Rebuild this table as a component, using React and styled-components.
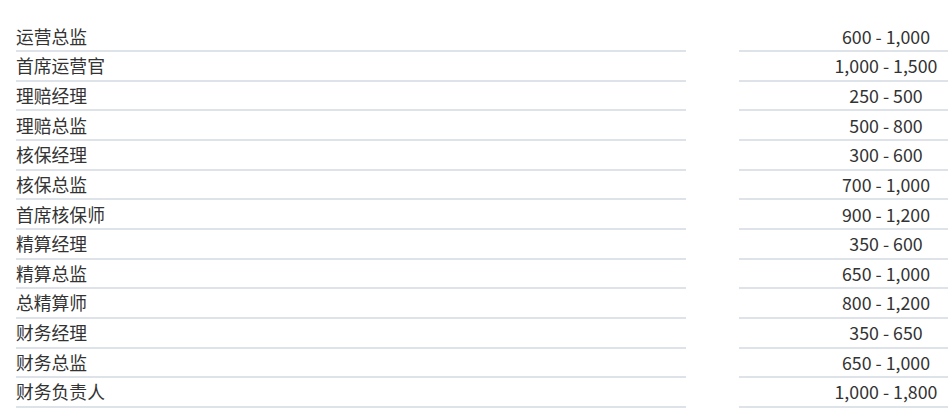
import styled, { createGlobalStyle } from 'styled-components';

const ROWS = [
  ['运营总监', '600 - 1,000'],
  ['首席运营官', '1,000 - 1,500'],
  ['理赔经理', '250 - 500'],
  ['理赔总监', '500 - 800'],
  ['核保经理', '300 - 600'],
  ['核保总监', '700 - 1,000'],
  ['首席核保师', '900 - 1,200'],
  ['精算经理', '350 - 600'],
  ['精算总监', '650 - 1,000'],
  ['总精算师', '800 - 1,200'],
  ['财务经理', '350 - 650'],
  ['财务总监', '650 - 1,000'],
  ['财务负责人', '1,000 - 1,800'],
];

function App() {
  return (
    <>
      <GlobalStyle />
      <PageWrapper>
        <SalaryTable>
          {ROWS.map(([title, range]) => (
            <Row key={title}>
              <TitleCell>{title}</TitleCell>
              <RangeCell>{range}</RangeCell>
            </Row>
          ))}
        </SalaryTable>
      </PageWrapper>
    </>
  );
}

export default App;

const GlobalStyle = createGlobalStyle`
  body {
    margin: 0;
    background: #fff;
    overflow: hidden;
    font-family: "Noto Sans CJK SC", "Noto Sans", sans-serif;
  }
`;

const PageWrapper = styled.div`
  width: 948px;
  height: 414px;
  overflow: hidden;
  padding: 22.5px 0 0 16px;
  box-sizing: border-box;
`;

const SalaryTable = styled.div`
  display: flex;
  flex-direction: column;
  width: 1020px;
`;

const Row = styled.div`
  display: grid;
  grid-template-columns: 670px 294px;
  column-gap: 53px;
  height: 29.67px;
`;

const Cell = styled.div`
  box-sizing: border-box;
  height: 100%;
  border-bottom: 2px solid #dde3e9;
  display: flex;
  align-items: center;
  font-size: 17.8px;
  color: #333;
  padding-bottom: 1.5px;
`;

const TitleCell = styled(Cell)`
  justify-content: flex-start;
`;

const RangeCell = styled(Cell)`
  justify-content: center;
`;
